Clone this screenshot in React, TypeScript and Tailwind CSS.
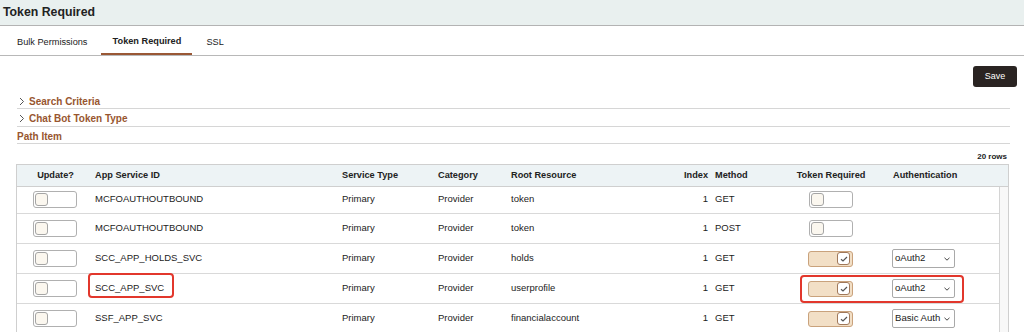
const rows = [
  { id: 'MCFOAUTHOUTBOUND', root: 'token', method: 'GET', token: false, auth: '' },
  { id: 'MCFOAUTHOUTBOUND', root: 'token', method: 'POST', token: false, auth: '' },
  { id: 'SCC_APP_HOLDS_SVC', root: 'holds', method: 'GET', token: true, auth: 'oAuth2' },
  { id: 'SCC_APP_SVC', root: 'userprofile', method: 'GET', token: true, auth: 'oAuth2', mark: true },
  { id: 'SSF_APP_SVC', root: 'financialaccount', method: 'GET', token: true, auth: 'Basic Auth' },
];

const cols = 'grid grid-cols-[75px_246px_96px_73px_153px_51px_69px_100px_119px]';

const Toggle = ({ on }: { on: boolean }) =>
  on ? (
    <div className="w-[45px] h-[16px] rounded-[3px] border border-[#c9a27c] bg-[#f2dfc6] flex items-center justify-end pr-[2px]">
      <div className="w-[13px] h-[13px] rounded-[3px] border border-[#a0785a] bg-white flex items-center justify-center">
        <svg width="8" height="6" viewBox="0 0 8 6">
          <path d="M1 3.2 L3 5 L7 1" fill="none" stroke="#555" strokeWidth="1.2" />
        </svg>
      </div>
    </div>
  ) : (
    <div className="w-[44px] h-[17px] rounded-[3px] border border-[#b0b0b0] bg-white flex items-center pl-[1px]">
      <div className="w-[13px] h-[13px] rounded-[3px] border border-[#a5a5a5] bg-[#fbf7ef]" />
    </div>
  );

const Select = ({ value }: { value: string }) => (
  <div className="w-[63px] h-[19px] rounded-[2px] border border-[#a9a9a9] bg-white flex items-center justify-between pl-[2px] pr-[4px] text-[9.6px]">
    <span className="whitespace-nowrap">{value}</span>
    <svg width="6" height="4" viewBox="0 0 6 4" className="shrink-0">
      <path d="M0.5 0.8 L3 3.2 L5.5 0.8" fill="none" stroke="#444" strokeWidth="1" />
    </svg>
  </div>
);

const Chevron = () => (
  <svg width="6" height="9" viewBox="0 0 6 9" className="mr-[4px]">
    <path d="M1 1 L4.5 4.5 L1 8" fill="none" stroke="#555" strokeWidth="1" />
  </svg>
);

export default function App() {
  return (
    <div className="w-[1024px] h-[332px] overflow-hidden bg-white text-[#222] font-['Liberation_Sans',Arial,sans-serif]">
      <div className="h-[26px] bg-[#e9f0ef] border-b border-[#b3b3b3] flex items-center pl-[3px]">
        <span className="text-[12.3px] font-bold">Token Required</span>
      </div>
      <div className="h-[30px] border-b border-[#b8b8b8] flex items-end pl-[17px] text-[9.2px]">
        <div className="h-full flex items-center pt-[4px]">Bulk Permissions</div>
        <div className="h-full ml-[14px] w-[91px] flex items-center justify-center pt-[4px] border-b-[2px] border-[#9a5835] font-bold">Token Required</div>
        <div className="h-full flex items-center pt-[4px] ml-[14px]">SSL</div>
      </div>
      <div className="flex justify-end pr-[7px] mt-[10px]">
        <div className="w-[44px] h-[21px] rounded-[3px] bg-[#2a2422] text-white text-[9px] flex items-center justify-center">Save</div>
      </div>
      <div className="ml-[17px] w-[993px] mt-[5px] text-[10px] font-bold text-[#98562f]">
        <div className="h-[17px] border-b border-[#d6d6d6] flex items-center pt-[3px] pl-[2px]">
          <Chevron />Search Criteria
        </div>
        <div className="h-[18px] border-b border-[#d6d6d6] flex items-center pt-[2px] pl-[2px]">
          <Chevron />Chat Bot Token Type
        </div>
        <div className="h-[17px] border-b border-[#d6d6d6] flex items-center pt-[3px]">Path Item</div>
      </div>
      <div className="ml-[16px] w-[993px] h-[20px] flex items-center justify-end pr-[2px] pt-[5px] text-[8px] font-bold">20 rows</div>
      <div className="ml-[16px] w-[993px] border border-[#cfcfcf] text-[9.5px]">
        <div className={`${cols} h-[22px] items-center bg-[#edf3f5] border-b border-[#cfcfcf] font-bold text-[9.2px]`}>
          <div className="text-center pl-[2px]">Update?</div>
          <div className="pl-[3px]">App Service ID</div>
          <div className="pl-[4px]">Service Type</div>
          <div className="pl-[4px]">Category</div>
          <div className="pl-[4px]">Root Resource</div>
          <div className="text-right pr-[3px]">Index</div>
          <div className="pl-[4px]">Method</div>
          <div className="text-center pl-[2px]">Token Required</div>
          <div className="pl-[13px]">Authentication</div>
        </div>
        <div className="flex">
          <div className="w-[982px]">
            {rows.map((r, i) => (
              <div
                key={i}
                className={`${cols} relative items-center border-b border-[#d9d9d9] ${i === 0 ? 'h-[27px] pb-[2px]' : 'h-[30px]'}`}
              >
                <div className="flex justify-center pl-[1px]"><Toggle on={false} /></div>
                <div className="pl-[3px] relative">
                  {r.id}
                  {r.mark && <div className="absolute left-[-4px] top-[-8px] w-[86px] h-[25px] rounded-[4px] border-2 border-[#e2372c]" />}
                </div>
                <div className="pl-[4px]">Primary</div>
                <div className="pl-[4px]">Provider</div>
                <div className="pl-[4px]">{r.root}</div>
                <div className="text-right pr-[3px]">1</div>
                <div className="pl-[4px]">{r.method}</div>
                <div className="flex justify-center pl-[1px]"><Toggle on={r.token} /></div>
                <div className="pl-[12px]">{r.auth && <Select value={r.auth} />}</div>
                {r.mark && <div className="absolute left-[783px] top-[1px] w-[164px] h-[28px] rounded-[4px] border-2 border-[#e2372c]" />}
              </div>
            ))}
          </div>
          <div className="flex-1 border-l border-[#d4d4d4] bg-[#f8f8f8]" />
        </div>
      </div>
    </div>
  );
}
